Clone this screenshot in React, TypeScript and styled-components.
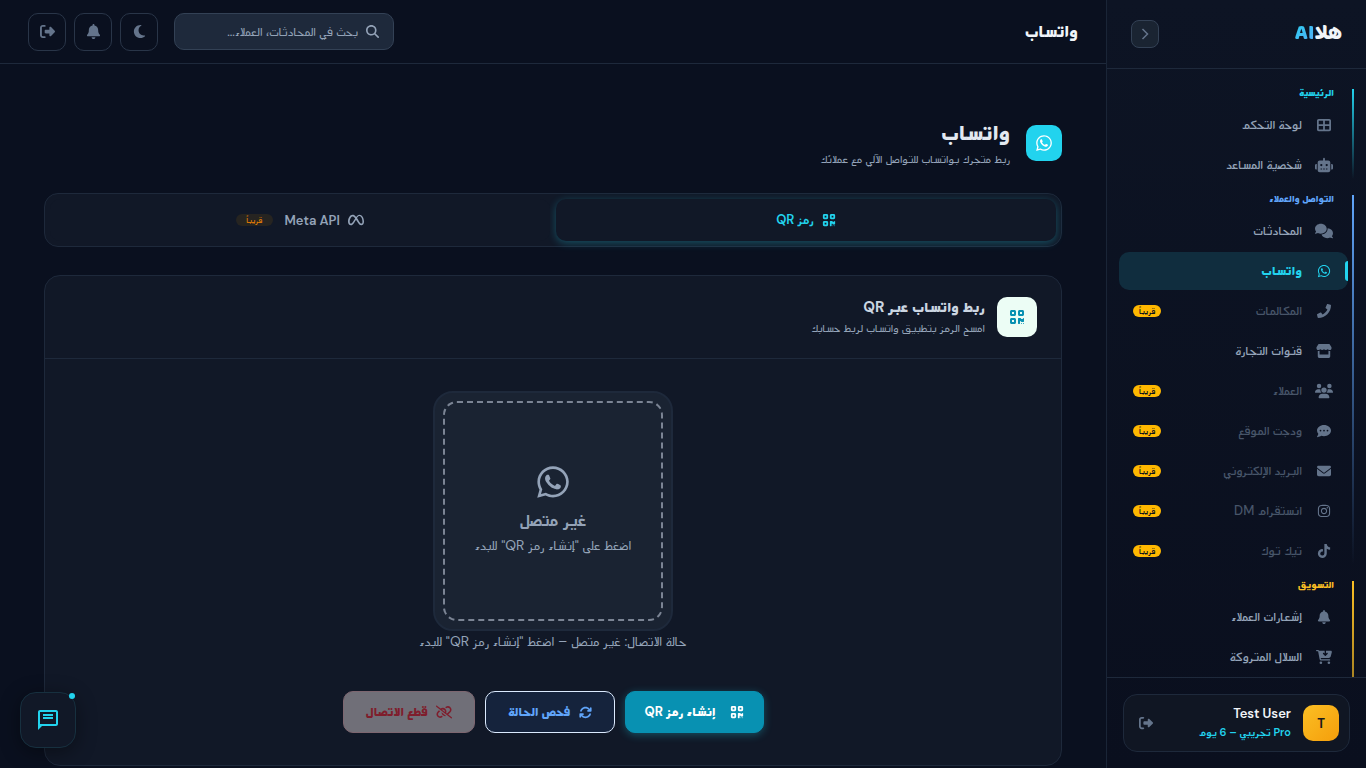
import React from "react";
import styled, { createGlobalStyle, css } from "styled-components";
import {
  FaArrowsRotate,
  FaBell,
  FaCartArrowDown,
  FaCommentDots,
  FaComments,
  FaEnvelope,
  FaInstagram,
  FaLinkSlash,
  FaMagnifyingGlass,
  FaMeta,
  FaMoon,
  FaQrcode,
  FaRightFromBracket,
  FaRobot,
  FaStore,
  FaTableCellsLarge,
  FaTiktok,
  FaUsers,
  FaWhatsapp,
} from "react-icons/fa6";
import { FaPhone } from "react-icons/fa";

const GlobalStyle = createGlobalStyle`
  *, *::before, *::after { box-sizing: border-box; }
  html, body, #root { height: 100%; }
  body {
    margin: 0;
    background: #0a101f;
    color: #e2e8f0;
    font-family: "DM Sans", Mada, sans-serif;
    font-size: 14px;
    overflow: hidden;
  }
  button, input { font-family: inherit; }
  h1, h2, h3, p { margin: 0; }
  svg { display: block; flex: none; }
`;

const Shell = styled.div`
  display: flex;
  height: 100vh;
`;

const Sidebar = styled.aside`
  flex: 0 0 260px;
  display: flex;
  flex-direction: column;
  background: linear-gradient(180deg, #0d1424, #0a0f1e);
  border-left: 1px solid #1a2537;
`;

const Brand = styled.div`
  flex: none;
  display: flex;
  align-items: center;
  justify-content: space-between;
  height: 69px;
  padding: 0 24px;
  border-bottom: 1px solid #1e293b;
`;

const Logo = styled.a`
  color: #f1f5f9;
  font-family: "Baloo Bhaijaan 2", "DM Sans", sans-serif;
  font-size: 21px;
  font-weight: 800;
  line-height: 28px;
  text-decoration: none;
`;

const LogoAccent = styled.span`
  background: linear-gradient(135deg, #22d3ee, #60a5fa);
  background-clip: text;
  color: transparent;
`;

const CollapseButton = styled.button`
  display: grid;
  place-items: center;
  width: 28px;
  height: 28px;
  padding: 0;
  border: 1px solid #334155;
  border-radius: 8px;
  background: #1a2432;
  color: #64748b;
`;

const Nav = styled.nav`
  flex: 1;
  min-height: 0;
  overflow: hidden;
  padding: 20px 12px 0;
`;

const Section = styled.section<{ $color: string }>`
  position: relative;
  padding-right: 6px;
  padding-bottom: 11px;

  &:last-child {
    min-height: 300px;
  }

  &::before {
    content: "";
    position: absolute;
    top: 0;
    right: 0;
    bottom: 16px;
    width: 2px;
    background: linear-gradient(180deg, ${(p) => p.$color}, transparent);
  }
`;

const SectionTitle = styled.h3<{ $color: string }>`
  height: 17px;
  padding-right: 14px;
  color: ${(p) => p.$color};
  font-size: 10px;
  font-weight: 700;
  line-height: 8px;
`;

const NavList = styled.ul`
  display: flex;
  flex-direction: column;
  gap: 2px;
  margin: 0;
  padding: 0;
  list-style: none;
`;

const NavLink = styled.a<{ $active?: boolean; $soon?: boolean }>`
  position: relative;
  display: flex;
  align-items: center;
  gap: 12px;
  height: 38px;
  padding: 0 14px;
  border-radius: 10px;
  color: ${(p) => (p.$soon ? "#475569" : "#94a3b8")};
  font-size: 13px;
  font-weight: 500;
  text-decoration: none;

  svg {
    color: #64748b;
  }

  ${(p) =>
    p.$active &&
    css`
      background: #102d3e;
      color: #22d3ee;
      font-weight: 700;

      svg {
        color: #22d3ee;
      }

      &::after {
        content: "";
        position: absolute;
        top: 9px;
        right: 0;
        width: 3px;
        height: 20px;
        border-radius: 3px 0 0 3px;
        background: #22d3ee;
      }
    `}
`;

const NavIcon = styled.span<{ $size?: number }>`
  display: grid;
  place-items: center;
  width: 20px;
  font-size: ${(p) => p.$size ?? 14}px;
`;

const SoonBadge = styled.span`
  margin-right: auto;
  padding: 0 6px;
  border-radius: 10px;
  background: #ffb800;
  color: #0a0f1e;
  font-size: 8px;
  font-weight: 600;
  line-height: 12px;
`;

const SidebarFooter = styled.div`
  flex: none;
  padding: 16px;
  border-top: 1px solid #1e293b;
`;

const UserCard = styled.div`
  display: flex;
  align-items: center;
  gap: 12px;
  height: 58px;
  padding: 0 10px;
  border: 1px solid #1e293b;
  border-radius: 14px;
  background: #101623;
`;

const Avatar = styled.div`
  display: grid;
  place-items: center;
  width: 36px;
  height: 36px;
  border-radius: 10px;
  background: linear-gradient(135deg, #fbbf24, #f59e0b);
  color: #1a1a1a;
  font-size: 13px;
  font-weight: 700;
`;

const UserText = styled.div`
  flex: 1;
  line-height: 19px;
`;

const UserName = styled.div`
  color: #f1f5f9;
  font-size: 13px;
  font-weight: 600;
`;

const UserPlan = styled.div`
  color: #22d3ee;
  font-size: 11px;
  font-weight: 600;
`;

const PlainIconButton = styled.button`
  display: grid;
  place-items: center;
  width: 24px;
  height: 24px;
  padding: 0;
  border: 0;
  background: none;
  color: #64748b;
  font-size: 14px;
`;

const Main = styled.main`
  flex: 1;
  min-width: 0;
  display: flex;
  flex-direction: column;
  overflow: hidden;
`;

const TopBar = styled.header`
  flex: none;
  display: flex;
  align-items: center;
  gap: 8px;
  height: 64px;
  padding: 0 28px;
  border-bottom: 1px solid #1e293b;
`;

const TopTitle = styled.h2`
  margin-left: auto;
  color: #f1f5f9;
  font-size: 17px;
  font-weight: 700;
`;

const SearchBox = styled.label`
  display: flex;
  align-items: center;
  gap: 8px;
  width: 220px;
  height: 37px;
  margin-left: 8px;
  padding: 0 14px;
  border: 1px solid #334155;
  border-radius: 10px;
  background: #1e293b;
  color: #94a3b8;
  font-size: 13px;
`;

const SearchInput = styled.input`
  flex: 1;
  min-width: 0;
  padding: 0;
  border: 0;
  outline: 0;
  background: none;
  color: inherit;
  font-size: 13px;

  &::placeholder {
    color: #94a3b8;
    opacity: 1;
  }
`;

const SquareButton = styled.button`
  display: grid;
  place-items: center;
  width: 38px;
  height: 38px;
  padding: 0;
  border: 1px solid #293548;
  border-radius: 10px;
  background: none;
  color: #64748b;
  font-size: 15px;
`;

const Content = styled.div`
  flex: 1;
  min-height: 0;
  overflow: hidden;
  padding: 52px 44px 0;
`;

const PageHead = styled.div`
  display: flex;
  align-items: center;
  gap: 16px;
  height: 54px;
  margin-bottom: 23px;
`;

const PageIcon = styled.div`
  display: grid;
  place-items: center;
  width: 36px;
  height: 36px;
  border-radius: 10px;
  background: #22d3ee;
  color: #fff;
  font-size: 18px;
`;

const PageTitle = styled.h1`
  color: #e2e8f0;
  font-size: 22px;
  font-weight: 700;
  line-height: 32px;
`;

const Subtle = styled.p`
  color: #94a3b8;
  font-size: 12px;
  line-height: 20px;
`;

const Tabs = styled.div`
  display: flex;
  gap: 6px;
  margin-bottom: 28px;
  padding: 5px;
  border: 1px solid #1e293b;
  border-radius: 14px;
  background: #111827;
`;

const Tab = styled.button<{ $active?: boolean }>`
  flex: 1;
  display: flex;
  align-items: center;
  justify-content: center;
  gap: 8px;
  height: 42px;
  padding: 0;
  border: 0;
  border-radius: 10px;
  background: #111827;
  color: ${(p) => (p.$active ? "#22d3ee" : "#94a3b8")};
  font-size: 13px;
  font-weight: 600;
  box-shadow: ${(p) => (p.$active ? "0 2px 8px rgba(34, 211, 238, 0.3)" : "none")};
`;

const TabBadge = styled.span`
  margin-right: 4px;
  padding: 0 10px;
  border-radius: 10px;
  background: #262421;
  color: #d97706;
  font-size: 8px;
  line-height: 12px;
`;

const Card = styled.section`
  border: 1px solid #1e293b;
  border-radius: 16px;
  background: #111827;
`;

const CardHead = styled.header`
  display: flex;
  align-items: center;
  gap: 12px;
  padding: 20px 24px;
  border-bottom: 1px solid #1e293b;
`;

const CardIcon = styled.div`
  display: grid;
  place-items: center;
  width: 40px;
  height: 40px;
  border-radius: 10px;
  background: #ecfdf5;
  color: #0891b2;
  font-size: 16px;
`;

const CardTitle = styled.h2`
  color: #cbd5e1;
  font-size: 15px;
  font-weight: 700;
  line-height: 22px;
`;

const CardBody = styled.div`
  display: flex;
  flex-direction: column;
  align-items: center;
  padding: 32px;
`;

const QrFrame = styled.div`
  width: 240px;
  height: 240px;
  padding: 8px;
  border: 2px solid #1e293b;
  border-radius: 20px;
  background: #1a2332;
`;

const QrPlaceholder = styled.div`
  display: flex;
  flex-direction: column;
  align-items: center;
  justify-content: center;
  height: 100%;
  border: 2px dashed #7b8494;
  border-radius: 14px;
  color: #94a3b8;
  font-size: 36px;
`;

const QrState = styled.p`
  margin-top: 8px;
  font-size: 18px;
  font-weight: 600;
  line-height: 24px;
`;

const QrHint = styled.p`
  font-size: 14px;
  line-height: 26px;
`;

const StatusLine = styled.p`
  margin-bottom: 40px;
  color: #94a3b8;
  font-size: 14px;
  line-height: 20px;
`;

const Actions = styled.div`
  display: flex;
  gap: 10px;
`;

const variants = {
  primary: css`
    gap: 14px;
    padding: 0 19px;
    border-color: #0891b2;
    background: #0891b2;
    color: #fff;
    box-shadow: 0 2px 8px rgba(34, 211, 238, 0.3);
  `,
  outline: css`
    border-color: #dbeafe;
    background: #15233c;
    color: #60a5fa;
  `,
  danger: css`
    border-color: #7d6670;
    background: #706f78;
    color: #7f1d2c;
  `,
};

const ActionButton = styled.button<{ $variant: keyof typeof variants }>`
  display: flex;
  align-items: center;
  gap: 8px;
  height: 42px;
  padding: 0 22px;
  border: 1px solid;
  border-radius: 10px;
  font-size: 13px;
  font-weight: 700;
  ${(p) => variants[p.$variant]}
`;

const ChatButton = styled.button`
  position: fixed;
  left: 20px;
  bottom: 20px;
  display: grid;
  place-items: center;
  width: 56px;
  height: 56px;
  padding: 0;
  border: 1px solid #17303f;
  border-radius: 16px;
  background: #111827;
  color: #22d3ee;
  box-shadow: 0 4px 20px rgba(0, 0, 0, 0.4);
`;

const ChatDot = styled.span`
  position: absolute;
  top: 0;
  right: 0;
  width: 6px;
  height: 6px;
  border-radius: 50%;
  background: #22d3ee;
`;

type Item = {
  label: string;
  icon: React.ReactNode;
  size?: number;
  active?: boolean;
  soon?: boolean;
};

const sections: { title: string; color: string; items: Item[] }[] = [
  {
    title: "الرئيسية",
    color: "#22d3ee",
    items: [
      { label: "لوحة التحكم", icon: <FaTableCellsLarge /> },
      { label: "شخصية المساعد", icon: <FaRobot />, size: 18 },
    ],
  },
  {
    title: "التواصل والعملاء",
    color: "#60a5fa",
    items: [
      { label: "المحادثات", icon: <FaComments />, size: 18 },
      { label: "واتساب", icon: <FaWhatsapp />, active: true },
      { label: "المكالمات", icon: <FaPhone />, soon: true },
      { label: "قنوات التجارة", icon: <FaStore />, size: 16 },
      { label: "العملاء", icon: <FaUsers />, size: 18, soon: true },
      { label: "ودجت الموقع", icon: <FaCommentDots />, soon: true },
      { label: "البريد الإلكتروني", icon: <FaEnvelope />, soon: true },
      { label: "انستقرام DM", icon: <FaInstagram />, soon: true },
      { label: "تيك توك", icon: <FaTiktok />, soon: true },
    ],
  },
  {
    title: "التسويق",
    color: "#fbbf24",
    items: [
      { label: "إشعارات العملاء", icon: <FaBell /> },
      { label: "السلال المتروكة", icon: <FaCartArrowDown />, size: 16 },
    ],
  },
];

export default function App() {
  return (
    <Shell dir="rtl" lang="ar">
      <GlobalStyle />
      <Sidebar>
        <Brand>
          <Logo href="#">
            هلا<LogoAccent>AI</LogoAccent>
          </Logo>
          <CollapseButton aria-label="طي القائمة">
            <svg width="14" height="14" viewBox="0 0 14 14" fill="none" stroke="currentColor" strokeWidth="1.5" aria-hidden="true">
              <path d="M4.5 2l5 5-5 5" />
            </svg>
          </CollapseButton>
        </Brand>
        <Nav>
          {sections.map((s) => (
            <Section key={s.title} $color={s.color}>
              <SectionTitle $color={s.color}>{s.title}</SectionTitle>
              <NavList>
                {s.items.map((i) => (
                  <li key={i.label}>
                    <NavLink href="#" $active={i.active} $soon={i.soon}>
                      <NavIcon $size={i.size}>{i.icon}</NavIcon>
                      {i.label}
                      {i.soon && <SoonBadge>قريباً</SoonBadge>}
                    </NavLink>
                  </li>
                ))}
              </NavList>
            </Section>
          ))}
        </Nav>
        <SidebarFooter>
          <UserCard>
            <Avatar>T</Avatar>
            <UserText>
              <UserName>Test User</UserName>
              <UserPlan>Pro تجريبي – 6 يوم</UserPlan>
            </UserText>
            <PlainIconButton aria-label="تسجيل الخروج">
              <FaRightFromBracket />
            </PlainIconButton>
          </UserCard>
        </SidebarFooter>
      </Sidebar>

      <Main>
        <TopBar>
          <TopTitle>واتساب</TopTitle>
          <SearchBox>
            <FaMagnifyingGlass />
            <SearchInput type="search" aria-label="بحث" placeholder="بحث في المحادثات، العملاء..." />
          </SearchBox>
          <SquareButton aria-label="الوضع الليلي">
            <FaMoon />
          </SquareButton>
          <SquareButton aria-label="الإشعارات">
            <FaBell />
          </SquareButton>
          <SquareButton aria-label="خروج">
            <FaRightFromBracket />
          </SquareButton>
        </TopBar>

        <Content>
          <PageHead>
            <PageIcon>
              <FaWhatsapp />
            </PageIcon>
            <div>
              <PageTitle>واتساب</PageTitle>
              <Subtle>ربط متجرك بواتساب للتواصل الآلي مع عملائك</Subtle>
            </div>
          </PageHead>

          <Tabs role="tablist">
            <Tab role="tab" aria-selected="true" $active>
              <FaQrcode size={14} />
              رمز QR
            </Tab>
            <Tab role="tab" aria-selected="false">
              <FaMeta size={16} />
              Meta API
              <TabBadge>قريباً</TabBadge>
            </Tab>
          </Tabs>

          <Card>
            <CardHead>
              <CardIcon>
                <FaQrcode />
              </CardIcon>
              <div>
                <CardTitle>ربط واتساب عبر QR</CardTitle>
                <Subtle>امسح الرمز بتطبيق واتساب لربط حسابك</Subtle>
              </div>
            </CardHead>
            <CardBody>
              <QrFrame>
                <QrPlaceholder>
                  <FaWhatsapp />
                  <QrState>غير متصل</QrState>
                  <QrHint>اضغط على "إنشاء رمز QR" للبدء</QrHint>
                </QrPlaceholder>
              </QrFrame>
              <StatusLine>حالة الاتصال: غير متصل – اضغط "إنشاء رمز QR" للبدء</StatusLine>
              <Actions>
                <ActionButton $variant="primary">
                  <FaQrcode size={14} />
                  إنشاء رمز QR
                </ActionButton>
                <ActionButton $variant="outline">
                  <FaArrowsRotate size={13} />
                  فحص الحالة
                </ActionButton>
                <ActionButton $variant="danger" disabled>
                  <FaLinkSlash size={16} />
                  قطع الاتصال
                </ActionButton>
              </Actions>
            </CardBody>
          </Card>
        </Content>
      </Main>

      <ChatButton aria-label="المحادثة">
        <svg width="24" height="24" viewBox="0 0 24 24" fill="currentColor" aria-hidden="true">
          <path d="M20 2H4c-1.1 0-2 .9-2 2v18l4-4h14c1.1 0 2-.9 2-2V4c0-1.1-.9-2-2-2zm0 14H4V4h16v12zM7 6h10v2H7zM7 9h10v2H7z" />
        </svg>
        <ChatDot />
      </ChatButton>
    </Shell>
  );
}
